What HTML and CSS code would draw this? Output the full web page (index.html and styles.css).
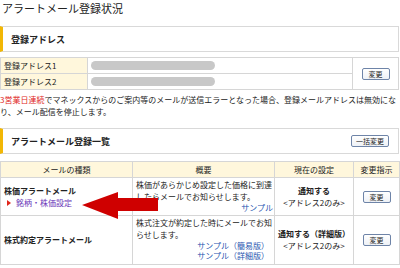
FILE: index.html
```html
<!DOCTYPE html>
<html lang="ja">
<head>
    <meta charset="UTF-8">
    <meta name="viewport" content="width=device-width, initial-scale=1.0">
    <title>アラートメール登録状況</title>
    <link rel="stylesheet" href="styles.css">
</head>
<body>
    <h1 class="pageTitle">アラートメール登録状況</h1>

    <div class="secHead">
        <span>登録アドレス</span>
    </div>
    <table class="addrTbl">
        <tr>
            <th>登録アドレス1</th>
            <td><span class="masked"></span></td>
            <td class="btnCell" rowspan="2"><button class="smallBtn">変更</button></td>
        </tr>
        <tr>
            <th>登録アドレス2</th>
            <td><span class="masked"></span></td>
        </tr>
    </table>

    <p class="note"><span class="red">3営業日連続</span><span>でマネックスからのご案内等のメールが送信エラーとなった場合、登録メールアドレスは無効にな</span><span>り、メール配信を停止します。</span></p>

    <div class="secHead">
        <span>アラートメール登録一覧</span>
        <button class="smallBtn wide">一括変更</button>
    </div>
    <table class="alertTbl">
        <colgroup>
            <col class="c1">
            <col class="c2">
            <col class="c3">
            <col class="c4">
        </colgroup>
        <tr>
            <th>メールの種類</th>
            <th>概要</th>
            <th>現在の設定</th>
            <th>変更指示</th>
        </tr>
        <tr class="r1">
            <td class="kind">株価アラートメール<br><a class="setLink" href="#">銘柄・株価設定</a></td>
            <td class="desc">株価があらかじめ設定した価格に到達したらメールでお知らせします。<div class="samples"><a href="#">サンプル</a></div></td>
            <td class="state"><b>通知する</b><br>&lt;アドレス2のみ&gt;</td>
            <td class="btnCell"><button class="smallBtn">変更</button></td>
        </tr>
        <tr class="r2">
            <td class="kind">株式約定アラートメール</td>
            <td class="desc">株式注文が約定した時にメールでお知らせします。<div class="samples"><a href="#">サンプル（簡易版）</a><br><a href="#">サンプル（詳細版）</a></div></td>
            <td class="state"><b>通知する（詳細版）</b><br>&lt;アドレス2のみ&gt;</td>
            <td class="btnCell"><button class="smallBtn">変更</button></td>
        </tr>
    </table>

    <!-- red pointer over the settings link -->
    <svg class="pointer" width="80" height="30" viewBox="0 0 80 30">
        <polygon points="0,14 36,1 36,7 76,7 76,20 36,20 36,28" fill="#cf0000"/>
    </svg>
</body>
</html>
```

FILE: styles.css
```css
body{
    margin: 0;
    width: 400px;
    position: relative;
    font-family: "Noto Sans CJK JP", sans-serif;
    font-size: 8px;
    color: #222;
    background: #fff;
}
.pageTitle{
    margin: 0;
    padding-left: 2px;
    font-size: 11px;
    font-weight: normal;
    line-height: 16px;
    color: #222;
}
.secHead{
    margin-top: 10px;
    height: 24px;
    border: 1px solid #d9d9d9;
    border-left: 3px solid #f2b705;
    margin-right: 1px;
    padding-left: 8px;
    padding-right: 9px;
    display: flex;
    align-items: center;
    justify-content: space-between;
    font-size: 9px;
    font-weight: bold;
}
table{
    border-collapse: collapse;
    width: 399px;
    table-layout: fixed;
}
th, td{
    border: 1px solid #d6d6d6;
    padding: 0 3px;
    font-weight: normal;
    line-height: 12px;
}
.addrTbl{
    margin-top: 5px;
}
.addrTbl th{
    width: 80px;
    height: 15px;
    text-align: left;
    background: #fff7dc;
}
.addrTbl td{
    height: 15px;
}
.addrTbl td.btnCell{
    width: 39px;
}
.masked{
    display: block;
    width: 124px;
    height: 9px;
    border-radius: 5px;
    background: #c8c8c8;
    filter: blur(0.6px);
}
.btnCell{
    text-align: center;
}
.smallBtn{
    font-family: inherit;
    font-size: 7px;
    line-height: 10px;
    width: 28px;
    height: 12px;
    padding: 0;
    border: 1px solid #6e84a8;
    border-radius: 2px;
    background: linear-gradient(#ffffff, #eef1f6);
    color: #222;
}
.smallBtn.wide{
    width: 38px;
}
.note{
    margin: 4px 0 0;
    line-height: 12px;
}
.red{
    color: #e0261b;
}
.alertTbl{
    margin-top: 7px;
}
.alertTbl th{
    height: 15px;
    background: #fff7dc;
    text-align: center;
}
.c1{ width: 132px; }
.c2{ width: 142px; }
.c3{ width: 79px; }
.c4{ width: 46px; }
.r1 td{
    height: 36px;
}
.r2 td{
    height: 47px;
}
.kind{
    font-weight: bold;
}
.setLink{
    font-weight: normal;
    color: #6a36b8;
    text-decoration: none;
    padding-left: 12px;
    position: relative;
}
.setLink::before{
    content: "";
    position: absolute;
    left: 3px;
    top: 3px;
    border-left: 4px solid #e0261b;
    border-top: 3px solid transparent;
    border-bottom: 3px solid transparent;
}
.desc{
    vertical-align: top;
    padding-top: 1px;
    padding-right: 1px;
}
.samples{
    text-align: right;
    line-height: 10px;
}
.samples a{
    color: #1f55b0;
    text-decoration: none;
}
.r2 .samples{
    padding-right: 4px;
}
.state{
    text-align: center;
}
.pointer{
    position: absolute;
    left: 82px;
    top: 191px;
}
```
